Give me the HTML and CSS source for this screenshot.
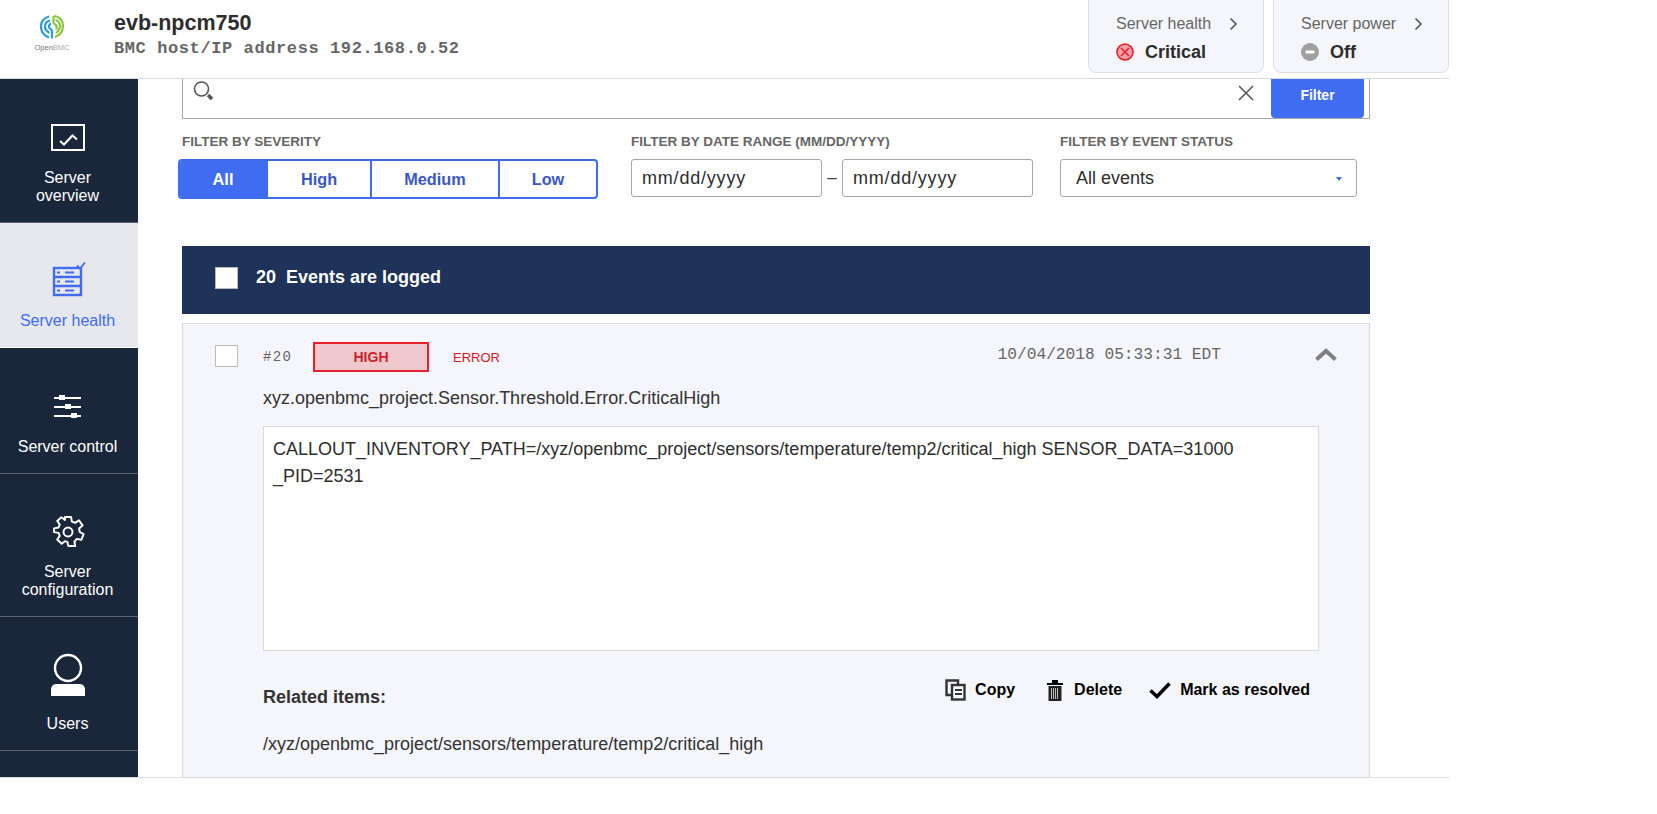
FILE: index.html
```html
<!DOCTYPE html>
<html lang="en">
<head>
  <meta charset="UTF-8" />
  <title>OpenBMC - Server health</title>
  <link rel="stylesheet" href="styles.css">
</head>
<body>
  <div class="page">
    <header class="header">
      <div class="logo">
        <svg width="24" height="24" viewBox="0 0 24 24" fill="none" stroke-width="2.200">
          <path d="M9 1.500C4 3 1 7 1 11.500c0 5 3 9 8 11" stroke="#2a9fd6"/>
          <path d="M10 5.500C6.500 6.500 5 9 5 11.500c0 3 2 5 4.500 6.500" stroke="#2a9fd6"/>
          <path d="M11 8.500c-2.500 1-2.500 4-1 5l2 2v8" stroke="#2a9fd6"/>
          <path d="M14 1c6 1 9 5 9 10 0 5-3 9-8 11" stroke="#8cc63f"/>
          <path d="M15.500 5c3 1 4.500 3.500 4.500 6 0 3-1.500 5-4 7" stroke="#8cc63f"/>
          <path d="M13.500 1v7l3 2.500v4" stroke="#8cc63f"/>
        </svg>
        <span class="logo-text">Open<span class="logo-light">BMC</span></span>
      </div>
      <div class="host">
        <h1>evb-npcm750</h1>
        <p>BMC host/IP address 192.168.0.52</p>
      </div>
      <div class="tiles">
        <div class="tile">
          <div class="tile-top">Server health
            <svg width="9" height="14" viewBox="0 0 9 14" fill="none" stroke="#555" stroke-width="1.6"><path d="M1.5 1.5 7 7l-5.5 5.5"/></svg>
          </div>
          <div class="tile-status">
            <svg width="18" height="18" viewBox="0 0 18 18"><circle cx="9" cy="9" r="8" fill="#f0a0a6" stroke="#e8202c" stroke-width="1.6"/><path d="M5 5l8 8M13 5l-8 8" stroke="#e8202c" stroke-width="1.6"/></svg>
            Critical
          </div>
        </div>
        <div class="tile">
          <div class="tile-top">Server power
            <svg width="9" height="14" viewBox="0 0 9 14" fill="none" stroke="#555" stroke-width="1.6"><path d="M1.5 1.5 7 7l-5.5 5.5"/></svg>
          </div>
          <div class="tile-status">
            <svg width="18" height="18" viewBox="0 0 18 18"><circle cx="9" cy="9" r="9" fill="#a0a0a0"/><rect x="4.5" y="7.5" width="9" height="3" rx="1" fill="#fff"/></svg>
            Off
          </div>
        </div>
      </div>
    </header>

    <div class="body-row">
      <nav class="sidebar">
        <a class="nav-item nav-overview">
          <svg width="34" height="28" viewBox="0 0 34 28" fill="none" stroke="#fff"><rect x="1" y="1" width="32" height="25" stroke-width="2"/><path d="M9 17l4 3.500 8.500-9 4.500 4" stroke-width="2"/></svg>
          <span>Server<br>overview</span>
        </a>
        <a class="nav-item nav-health active">
          <svg width="36" height="36" viewBox="0 0 36 36" fill="none" stroke="#3f6cf0" stroke-width="2.400">
            <rect x="4" y="7" width="27" height="27"/>
            <path d="M4 16h27M4 25h27"/>
            <path d="M7 11.500h3M15 11.500h9M7 20.500h3M15 20.500h9M7 29.500h3M15 29.500h9" stroke-width="2"/>
            <path d="M27 4.500l3 3 5-6" stroke-width="1.800" fill="#e6e8ed"/>
          </svg>
          <span>Server health</span>
        </a>
        <a class="nav-item nav-control">
          <svg width="30" height="26" viewBox="0 0 30 26" fill="#fff">
            <rect x="1" y="3" width="27" height="2"/><rect x="6" y="1" width="6" height="5"/>
            <rect x="1" y="12" width="27" height="2"/><rect x="12" y="10" width="6" height="5"/>
            <rect x="1" y="21" width="27" height="2"/><rect x="18" y="19" width="6" height="5"/>
          </svg>
          <span>Server control</span>
        </a>
        <a class="nav-item nav-config">
          <svg width="36" height="36" viewBox="0 0 24 24" fill="none" stroke="#fff" stroke-width="1.300" stroke-linejoin="round">
            <circle cx="12" cy="12" r="3"/>
            <path d="M10 2h4l.6 3 2.200.9 2.500-1.700 2.400 3.400-2.300 2 .4 2.400 2.600 1.400-1.500 3.800-3-.6-1.600 1.800.5 3h-4.600l-.6-2.800-1.600-.5-2.200 1.700-3-2.800 1.700-2.400-.8-2-3-.5V9.600l3-.6.800-2-1.700-2.400 2.800-2.400 2.400 1.700z"/>
          </svg>
          <span>Server<br>configuration</span>
        </a>
        <a class="nav-item nav-users">
          <svg width="36" height="44" viewBox="0 0 36 44">
            <circle cx="18" cy="15" r="13" fill="none" stroke="#fff" stroke-width="2.400"/>
            <path d="M1 43v-6c0-4 2-6 6-6h22c4 0 6 2 6 6v6z" fill="#fff"/>
          </svg>
          <span>Users</span>
        </a>
      </nav>

      <main class="content">
        <div class="search">
          <svg class="search-icon" width="22" height="22" viewBox="0 0 22 22" fill="none" stroke="#555">
            <circle cx="8.500" cy="8" r="7" stroke-width="1.600"/>
            <path d="M15 14l4 4" stroke-width="3.500"/>
          </svg>
          <svg class="search-clear" width="16" height="16" viewBox="0 0 16 16" fill="none" stroke="#555" stroke-width="1.500"><path d="M1 1l14 14M15 1 1 15"/></svg>
          <button class="filter-btn">Filter</button>
        </div>

        <div class="filters">
          <div class="filter-group severity">
            <div class="filter-label">FILTER BY SEVERITY</div>
            <div class="btn-group">
              <span class="sev sev-all on">All</span>
              <span class="sev sev-high">High</span>
              <span class="sev sev-medium">Medium</span>
              <span class="sev sev-low">Low</span>
            </div>
          </div>
          <div class="filter-group dates">
            <div class="filter-label">FILTER BY DATE RANGE (MM/DD/YYYY)</div>
            <div class="date-row">
              <span class="field date">mm/dd/yyyy</span>
              <span class="dash">–</span>
              <span class="field date">mm/dd/yyyy</span>
            </div>
          </div>
          <div class="filter-group status">
            <div class="filter-label">FILTER BY EVENT STATUS</div>
            <div class="field select">All events<i class="caret"></i></div>
          </div>
        </div>

        <div class="log-bar">
          <span class="check check-bar"></span>
          <strong>20&nbsp; Events are logged</strong>
        </div>

        <section class="log-card">
          <div class="log-top">
            <span class="check"></span>
            <span class="log-id">#20</span>
            <span class="badge">HIGH</span>
            <span class="log-type">ERROR</span>
            <span class="log-date">10/04/2018 05:33:31 EDT</span>
            <svg class="chevron" width="22" height="13" viewBox="0 0 22 13" fill="none" stroke="#808080" stroke-width="4"><path d="M1.500 11.500 11 3l9.500 8.500"/></svg>
          </div>
          <div class="log-body">
            <p class="log-name">xyz.openbmc_project.Sensor.Threshold.Error.CriticalHigh</p>
            <div class="log-detail">CALLOUT_INVENTORY_PATH=/xyz/openbmc_project/sensors/temperature/temp2/critical_high SENSOR_DATA=31000<br>_PID=2531</div>
            <div class="log-foot">
              <strong class="related">Related items:</strong>
              <div class="actions">
                <span class="action action-copy">
                  <svg width="21" height="22" viewBox="0 0 21 22" fill="none" stroke="#333" stroke-width="2.400"><path d="M13 5V1.500H1.500V16H6"/><rect x="7" y="6" width="12.500" height="14.500"/><path d="M10 11h7M10 15h7" stroke-width="1.800"/></svg>
                  Copy
                </span>
                <span class="action action-delete">
                  <svg width="16" height="21" viewBox="0 0 16 21"><path d="M0 3h16v2H0zM5 0h6v3H5z" fill="#000"/><path d="M1.500 6h13v15h-13z" fill="#222"/><path d="M4.500 8v11M6.500 8v11M8.500 8v11M10.500 8v11" stroke="#bbb"/></svg>
                  Delete
                </span>
                <span class="action action-resolve">
                  <svg width="22" height="17" viewBox="0 0 22 17" fill="none" stroke="#000" stroke-width="3.500"><path d="M1.500 8.500 8 14.500 20.500 1.500"/></svg>
                  Mark as resolved
                </span>
              </div>
            </div>
            <p class="log-path">/xyz/openbmc_project/sensors/temperature/temp2/critical_high</p>
          </div>
        </section>
      </main>
    </div>
  </div>
</body>
</html>
```

FILE: styles.css
```css
* {
  box-sizing: border-box;
}

body {
  margin: 0;
  background: #fff;
  color: #222;
  font-family: "Liberation Sans", Arial, sans-serif;
}

.page {
  width: 1449px;
  height: 778px;
  overflow: hidden;
  border-bottom: 1px solid #d8dae0;
}

/* header */
.header {
  display: flex;
  height: 79px;
  border-bottom: 1px solid #d8dae0;
}

.logo {
  display: flex;
  flex-direction: column;
  align-items: center;
  width: 104px;
  margin-right: 10px;
  padding-top: 15px;
}

.logo-text {
  margin-top: 4px;
  font-size: 7.500px;
  color: #777;
}

.logo-light {
  color: #aaa;
}

.host {
  padding-top: 10px;
}

.host h1 {
  margin: 0;
  font-size: 21.500px;
  line-height: 26px;
  font-weight: bold;
  color: #2d2d2d;
}

.host p {
  margin: 3px 0 0;
  font-family: "Liberation Mono", monospace;
  font-size: 17px;
  letter-spacing: 0.600px;
  line-height: 20px;
  font-weight: bold;
  color: #666;
}

.tiles {
  display: flex;
  gap: 9px;
  margin-left: auto;
  height: 73px;
}

.tile {
  width: 176px;
  padding: 15px 0 0 27px;
  margin-top: -1px;
  background: #f5f6fb;
  border: 1px solid #dcdee4;
  border-radius: 0 0 8px 8px;
}

.tile-top {
  display: flex;
  align-items: center;
  gap: 18px;
  font-size: 16px;
  line-height: 18px;
  color: #666;
}

.tile-status {
  display: flex;
  align-items: center;
  gap: 11px;
  margin-top: 9px;
  font-size: 18px;
  line-height: 20px;
  font-weight: bold;
  color: #2d2d2d;
}

/* sidebar */
.body-row {
  display: flex;
  height: 698px;
}

.sidebar {
  flex: none;
  width: 138px;
  background: #1a2639;
  color: #fff;
  font-size: 16px;
  line-height: 18px;
}

.nav-item {
  display: flex;
  flex-direction: column;
  align-items: center;
  padding-right: 3px;
  text-align: center;
  border-bottom: 1px solid #5a6270;
}

.nav-overview {
  height: 144px;
  padding-top: 45px;
}

.nav-overview span {
  margin-top: 17px;
}

.nav-health {
  height: 125px;
  padding-top: 38px;
  background: #e6e8ed;
  color: #3f6cf0;
  border-bottom: 1px solid #fff;
}

.nav-health span {
  margin-top: 15px;
}

.nav-control {
  height: 126px;
  padding-top: 46px;
}

.nav-control span {
  margin-top: 18px;
}

.nav-config {
  height: 143px;
  padding-top: 40px;
}

.nav-config span {
  margin-top: 13px;
}

.nav-users {
  height: 134px;
  padding-top: 36px;
}

.nav-users span {
  margin-top: 18px;
}

/* main area */
.content {
  flex: 1;
  min-width: 0;
  padding: 0 79px 0 44px;
}

.search {
  position: relative;
  display: flex;
  align-items: flex-start;
  justify-content: flex-end;
  height: 40px;
  padding-right: 5px;
  border: 1px solid #a8a8a8;
  border-top: 0;
}

.search-icon {
  position: absolute;
  left: 10px;
  top: 2px;
}

.search-clear {
  margin: 6px 17px 0 0;
}

.filter-btn {
  width: 93px;
  height: 39px;
  padding-bottom: 8px;
  border: 0;
  border-radius: 0 0 4px 4px;
  background: #3f6cf0;
  color: #fff;
  font-family: inherit;
  font-size: 14px;
  font-weight: bold;
}

.filters {
  display: flex;
  margin: 15px 0 0 -4px;
}

.filter-label {
  height: 25px;
  font-size: 13.500px;
  line-height: 16px;
  font-weight: bold;
  color: #666;
}

.severity {
  width: 453px;
}

.severity .filter-label {
  padding-left: 4px;
}

.dates {
  width: 429px;
}

.btn-group {
  display: flex;
  width: 420px;
  height: 40px;
  border: 2px solid #3f6cf0;
  border-radius: 4px;
  overflow: hidden;
}

.sev {
  display: flex;
  align-items: center;
  justify-content: center;
  border-left: 2px solid #3f6cf0;
  font-size: 16.300px;
  font-weight: bold;
  color: #3a57c4;
}

.sev-all {
  width: 86px;
  border-left: 0;
}

.sev-high {
  width: 104px;
}

.sev-medium {
  width: 128px;
}

.sev-low {
  flex: 1;
}

.sev.on {
  background: #3f6cf0;
  color: #fff;
}

.date-row {
  display: flex;
  align-items: center;
}

.field {
  display: flex;
  align-items: center;
  height: 38px;
  background: #fff;
  border: 1px solid #a8a8a8;
  border-radius: 3px;
  font-size: 18px;
  color: #2d2d2d;
}

.date {
  width: 191px;
  padding-left: 10px;
  letter-spacing: 0.800px;
}

.dash {
  width: 20px;
  text-align: center;
  font-size: 17px;
  color: #444;
}

.select {
  position: relative;
  width: 297px;
  padding-left: 15px;
}

.caret {
  position: absolute;
  right: 14px;
  top: 17px;
  border: 3px solid transparent;
  border-top: 4px solid #3f6cf0;
  border-bottom: 0;
}

.log-bar {
  display: flex;
  align-items: center;
  height: 68px;
  margin-top: 47px;
  padding: 0 0 5px 33px;
  background: #1e325a;
  color: #fff;
  font-size: 18px;
}

.check {
  flex: none;
  width: 23px;
  height: 22px;
  background: #fff;
  border: 1px solid #bbb;
}

.check-bar {
  margin-right: 18px;
}

.log-card {
  height: 460px;
  margin-top: 9px;
  background: #f5f6fb;
  border: 1px solid #d8dae0;
  border-bottom: 0;
}

.log-top {
  display: flex;
  align-items: center;
  height: 30px;
  margin-top: 18px;
  padding-left: 32px;
}

.log-top .check {
  margin-bottom: 2px;
}

.log-id {
  margin-left: 25px;
  width: 50px;
  font-family: "Liberation Mono", monospace;
  font-size: 14px;
  letter-spacing: 1.300px;
  color: #666;
}

.badge {
  display: flex;
  align-items: center;
  justify-content: center;
  width: 116px;
  height: 30px;
  background: #eec8cc;
  border: 2px solid #e8202c;
  font-size: 14px;
  font-weight: bold;
  color: #d0202c;
}

.log-type {
  margin-left: 24px;
  font-size: 13px;
  color: #d9141e;
}

.log-date {
  margin-left: auto;
  padding-bottom: 4px;
  font-family: "Liberation Mono", monospace;
  font-size: 16.200px;
  color: #666;
}

.chevron {
  margin: 0 32px 5px 94px;
}

.log-body {
  padding: 0 50px 0 80px;
}

.log-name {
  margin: 15px 0 0;
  font-size: 18px;
  line-height: 22px;
  color: #333;
}

.log-detail {
  height: 225px;
  margin-top: 17px;
  padding: 9px;
  background: #fff;
  border: 1px solid #d8dae0;
  font-size: 18px;
  line-height: 27px;
  color: #2d2d2d;
}

.log-foot {
  display: flex;
  justify-content: space-between;
  margin-top: 27px;
}

.related {
  margin-top: 9px;
  font-size: 18px;
  line-height: 20px;
  color: #333;
}

.actions {
  display: flex;
  gap: 27px;
  padding-right: 9px;
}

.action {
  display: flex;
  align-items: center;
  gap: 9px;
  height: 24px;
  font-size: 16px;
  font-weight: bold;
  color: #000;
}

.action-delete {
  gap: 11px;
  margin-left: 5px;
}

.log-path {
  margin: 26px 0 0;
  font-size: 18px;
  line-height: 22px;
  color: #333;
}
```
